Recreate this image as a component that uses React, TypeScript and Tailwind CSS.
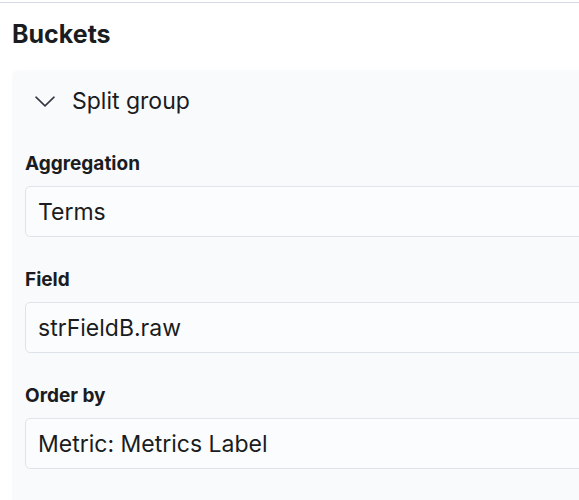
const fields = [
  { label: "Aggregation", value: "Terms" },
  { label: "Field", value: "strFieldB.raw" },
  { label: "Order by", value: "Metric: Metrics Label" },
];

function Chevron() {
  return (
    <svg width="20" height="11" viewBox="0 0 20 11" fill="none" className="shrink-0">
      <path d="M1 1.2 L10 9.8 L19 1.2" stroke="#343741" strokeWidth="1.6" strokeLinecap="round" strokeLinejoin="round" />
    </svg>
  );
}

export default function App() {
  return (
    <div className="h-[500px] w-[579px] overflow-hidden bg-white pt-[2px] font-['Inter',sans-serif] text-[#1a1c21]">
      <div className="border-t border-[#d3dae6]">
        <div className="pl-3">
          <h2 className="mt-[16px] text-[25px] font-bold leading-[30px]">Buckets</h2>

          <div className="mt-[21px] w-[620px] rounded-tl-[6px] bg-[#f9fafc] pb-10 pl-[13px]">
            <div className="flex items-center gap-[17px] pl-[10px] pt-[15px]">
              <Chevron />
              <span className="text-[23px] leading-[32px] text-[#1a1c21]">Split group</span>
            </div>

            <div className="mt-[35px] flex flex-col gap-[31px]">
              {fields.map((f) => (
                <div key={f.label}>
                  <div className="mb-[10px] text-[19px] font-bold leading-[24px]">{f.label}</div>
                  <div className="flex h-[51px] items-center rounded-[5px] border border-[#dfe3eb] bg-[#fbfcfd] pl-[12px] pt-[2px] text-[23px] text-[#1a1c21]">
                    {f.value}
                  </div>
                </div>
              ))}
            </div>
          </div>
        </div>
      </div>
    </div>
  );
}
